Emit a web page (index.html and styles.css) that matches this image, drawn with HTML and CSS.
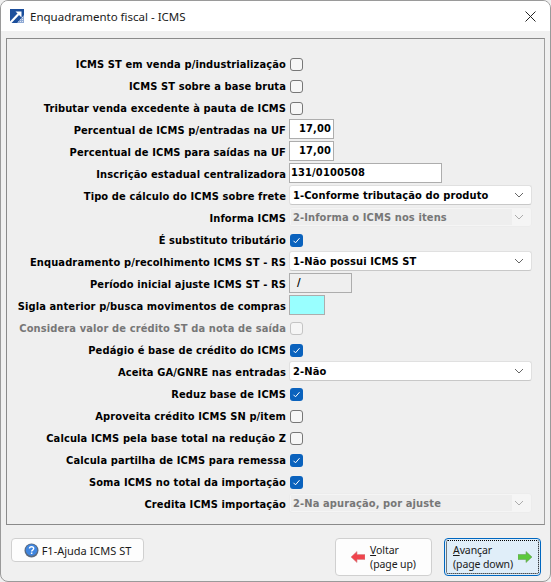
FILE: index.html
```html
<!DOCTYPE html>
<html lang="pt-BR">
<head>
  <meta charset="UTF-8">
  <title>Enquadramento fiscal - ICMS</title>
  <link rel="stylesheet" href="styles.css">
</head>
<body>

<svg class="defs" width="0" height="0">
  <symbol id="chev" viewBox="0 0 10 6"><path d="M1 1l4 4 4-4" fill="none" stroke="#666" stroke-width="1"/></symbol>
  <symbol id="tick" viewBox="0 0 13 13"><path d="M3.500 6.800l2 2 4-4.600" fill="none" stroke="#fff" stroke-width="1"/></symbol>
  <pattern id="dots" width="2" height="2" patternUnits="userSpaceOnUse">
    <rect width="2" height="2" fill="#8fa9d4"/>
    <rect width="1" height="1" fill="#dfe7f3"/>
  </pattern>
</svg>

<div class="window">

  <!-- Title bar -->
  <div class="titlebar">
    <svg class="app-icon" width="14" height="14" viewBox="0 0 14 14">
      <rect width="14" height="14" fill="#1c4f9c"/>
      <path d="M7 14L14 6v8z" fill="url(#dots)"/>
      <path d="M0 14L8.500 5" stroke="#fff" stroke-width="2.200" fill="none"/>
      <path d="M5.500 2.500H11.500V8.500z" fill="#fff"/>
    </svg>
    <span class="title">Enquadramento fiscal - ICMS</span>
    <svg class="close" width="11" height="11" viewBox="0 0 11 11"><path d="M.5.5l10 10M10.500.5l-10 10" stroke="#222" stroke-width="1" fill="none"/></svg>
  </div>

  <!-- Form -->
  <div class="panel">
    <div class="row"><label>ICMS ST em venda p/industrialização</label><span class="check"></span></div>
    <div class="row"><label>ICMS ST sobre a base bruta</label><span class="check"></span></div>
    <div class="row"><label>Tributar venda excedente à pauta de ICMS</label><span class="check"></span></div>
    <div class="row"><label>Percentual de ICMS p/entradas na UF</label><div class="input num">17,00</div></div>
    <div class="row"><label>Percentual de ICMS para saídas na UF</label><div class="input num">17,00</div></div>
    <div class="row"><label>Inscrição estadual centralizadora</label><div class="input wide">131/0100508</div></div>
    <div class="row"><label>Tipo de cálculo do ICMS sobre frete</label><div class="select"><span>1-Conforme tributação do produto</span><svg width="10" height="6"><use href="#chev"/></svg></div></div>
    <div class="row"><label>Informa ICMS</label><div class="select off"><span>2-Informa o ICMS nos itens</span><svg width="10" height="6"><use href="#chev"/></svg></div></div>
    <div class="row"><label>É substituto tributário</label><span class="check on"><svg width="13" height="13"><use href="#tick"/></svg></span></div>
    <div class="row"><label>Enquadramento p/recolhimento ICMS ST - RS</label><div class="select"><span>1-Não possui ICMS ST</span><svg width="10" height="6"><use href="#chev"/></svg></div></div>
    <div class="row"><label>Período inicial ajuste ICMS ST - RS</label><div class="input period">/</div></div>
    <div class="row"><label>Sigla anterior p/busca movimentos de compras</label><div class="input sigla"></div></div>
    <div class="row"><label class="muted">Considera valor de crédito ST da nota de saída</label><span class="check dis"></span></div>
    <div class="row"><label>Pedágio é base de crédito do ICMS</label><span class="check on"><svg width="13" height="13"><use href="#tick"/></svg></span></div>
    <div class="row"><label>Aceita GA/GNRE nas entradas</label><div class="select"><span>2-Não</span><svg width="10" height="6"><use href="#chev"/></svg></div></div>
    <div class="row"><label>Reduz base de ICMS</label><span class="check on"><svg width="13" height="13"><use href="#tick"/></svg></span></div>
    <div class="row"><label>Aproveita crédito ICMS SN p/item</label><span class="check"></span></div>
    <div class="row"><label>Calcula ICMS pela base total na redução Z</label><span class="check"></span></div>
    <div class="row"><label>Calcula partilha de ICMS para remessa</label><span class="check on"><svg width="13" height="13"><use href="#tick"/></svg></span></div>
    <div class="row"><label>Soma ICMS no total da importação</label><span class="check on"><svg width="13" height="13"><use href="#tick"/></svg></span></div>
    <div class="row"><label>Credita ICMS importação</label><div class="select off"><span>2-Na apuração, por ajuste</span><svg width="10" height="6"><use href="#chev"/></svg></div></div>
  </div>

  <!-- Buttons -->
  <div class="footer">
    <button class="btn help">
      <svg width="15" height="15" viewBox="0 0 15 15">
        <circle cx="7.500" cy="7.500" r="7" fill="#5a6a80"/>
        <circle cx="7.500" cy="7" r="5.800" fill="#3f86e0"/>
        <path d="M5.500 5.600c0-2.400 4.200-2.400 4.200 0 0 1.600-2.100 1.500-2.100 3" fill="none" stroke="#fff" stroke-width="1.400"/>
        <rect x="6.900" y="9.500" width="1.500" height="1.500" fill="#fff"/>
      </svg>
      F1-Ajuda ICMS ST
    </button>
    <button class="btn nav">
      <svg width="14" height="12" viewBox="0 0 14 12"><path d="M0 6l6-5.500v3h8v5H6v3z" fill="#f0444c" stroke="#d4888c" stroke-width=".6"/></svg>
      <span class="nav-text"><u>V</u>oltar<br>(page up)</span>
    </button>
    <button class="btn nav focused">
      <span class="inner">
        <span class="nav-text"><u>A</u>vançar<br>(page down)</span>
        <svg width="14" height="12" viewBox="0 0 14 12"><path d="M14 6L8 .5v3H0v5h8v3z" fill="#5cc83c" stroke="#6f9f60" stroke-width=".6"/></svg>
      </span>
    </button>
  </div>

</div>

</body>
</html>
```

FILE: styles.css
```css
* {
  box-sizing: border-box;
}

html, body {
  margin: 0;
  padding: 0;
  height: 100%;
  background: #f0f0f0;
}

body {
  font-family: "DejaVu Sans Condensed", "DejaVu Sans", sans-serif;
  font-size: 11px;
  color: #000;
}

.defs {
  display: block;
  height: 0;
}

.window {
  width: 551px;
  height: 582px;
  border: 1px solid #9a9a9a;
  border-radius: 8px;
  background: #f0f0f0;
  overflow: hidden;
}

.titlebar {
  display: flex;
  align-items: center;
  height: 30px;
  padding: 0 14px 0 9px;
  background: #fff;
}

.title {
  margin-left: 6px;
  font-family: "Noto Sans", sans-serif;
  font-size: 11.500px;
  color: #1a1a1a;
}

.close {
  margin-left: auto;
}

.panel {
  margin: 7px 5px 0;
  height: 487px;
  padding-top: 14px;
  border: 1px solid #8a8a8a;
  border-right-color: #a0a0a0;
  background: #efefef;
}

.row {
  display: grid;
  grid-template-columns: 279px 1fr;
  column-gap: 3px;
  align-items: center;
  height: 22px;
  padding-right: 13px;
}

.row label {
  padding-top: 1px;
  text-align: right;
  font-weight: 700;
  letter-spacing: .12px;
  white-space: nowrap;
}

.row label.muted {
  color: #777;
}

.check {
  display: block;
  width: 13px;
  height: 13px;
  margin-left: 1px;
  border: 1px solid #777;
  border-radius: 3px;
  background: #f6f6f6;
}

.check svg {
  display: block;
  margin: -1px;
}

.check.on {
  border: none;
  background: #0a62bd;
}

.check.on svg {
  margin: 0;
}

.check.dis {
  border-color: #c4c4c4;
  background: #f5f5f5;
}

.input {
  height: 20px;
  margin-top: -2px;
  padding: 0 2px 0 1px;
  border: 1px solid #adadad;
  background: #fff;
  font-weight: 700;
  letter-spacing: .15px;
  line-height: 18px;
}

.input.num {
  width: 45px;
  text-align: right;
}

.input.wide {
  width: 153px;
}

.input.period {
  width: 63px;
  padding-left: 7px;
  background: #efefef;
}

.input.sigla {
  width: 36px;
  background: #99ffff;
}

.select {
  display: flex;
  align-items: center;
  justify-content: space-between;
  width: 243px;
  height: 20px;
  margin-top: -2px;
  padding: 0 7px 0 1px;
  border: 1px solid #e0e0e0;
  border-bottom-color: #c8c8c8;
  border-radius: 3px;
  background: #fff;
  font-weight: 700;
  letter-spacing: .12px;
}

.select span {
  padding: 1px 0 0 2px;
}

.select.off {
  border-color: #ececec;
  background: #f5f5f5;
  color: #777;
}

.select.off span {
  flex: 0 0 221px;
  background: #eeeeee;
  line-height: 15px;
}

.select.off svg {
  opacity: .5;
}

.footer {
  display: flex;
  align-items: flex-start;
  gap: 12px;
  padding: 13px 9px 0 10px;
}

.btn {
  display: flex;
  align-items: center;
  justify-content: center;
  padding: 0;
  border: 1px solid #d0d0d0;
  border-radius: 4px;
  background: #fdfdfd;
  font: inherit;
  font-family: "Noto Sans", sans-serif;
  font-size: 11px;
  color: #1a1a1a;
}

.help {
  gap: 3px;
  width: 133px;
  height: 24px;
  margin-right: auto;
}

.nav {
  gap: 5px;
  width: 97px;
  height: 38px;
  font-size: 10.500px;
  letter-spacing: -.1px;
}

.nav-text {
  text-align: left;
  line-height: 14px;
}

.focused {
  padding: 1px;
  border-color: #0067c0;
  background: #e0eef9;
}

.inner {
  display: flex;
  align-items: center;
  justify-content: center;
  gap: 5px;
  width: 100%;
  height: 100%;
  border: 1px dotted #000;
  border-radius: 2px;
}
```
